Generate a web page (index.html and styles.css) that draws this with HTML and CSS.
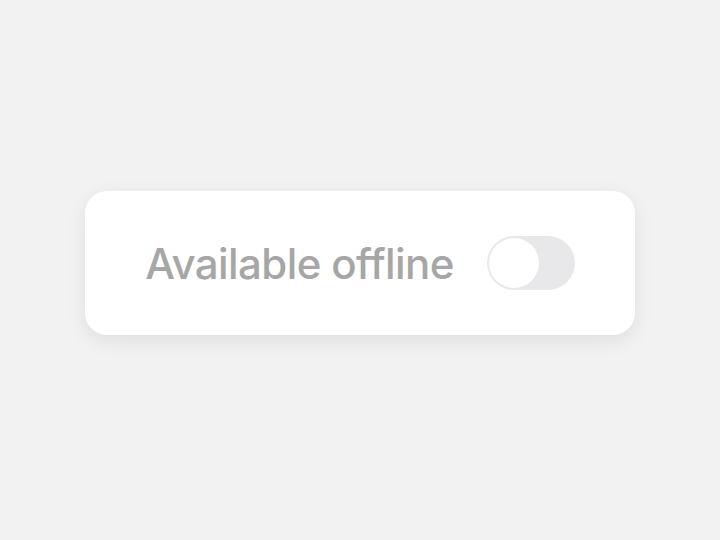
FILE: index.html
```html
<!DOCTYPE html>
<html lang="en">

<head>
  <meta charset="UTF-8" />
  <meta name="viewport" content="width=device-width, initial-scale=1.0" />
  <title>Available offline</title>
  <link rel="stylesheet" href="styles.css">
</head>

<body>

  <div class="card">
    <span class="label">Available offline</span>
    <button class="toggle" type="button" aria-pressed="false">
      <span class="knob"></span>
    </button>
  </div>

</body>

</html>
```

FILE: styles.css
```css
body {
  font-family: Inter, "Noto Sans", sans-serif;
  background: #f2f2f2;
  margin: 0;
  padding: 0 0 14px;
  height: 526px;
  display: flex;
  justify-content: center;
  align-items: center;
}

.card {
  background: #ffffff;
  border-radius: 22px;
  padding: 45px 60px;
  display: flex;
  align-items: center;
  gap: 33px;
  box-shadow: 0 6px 20px rgba(0, 0, 0, 0.08);
}

.label {
  font-size: 42px;
  font-weight: 500;
  color: #a6a6a6;
  letter-spacing: -0.6px;
}

.toggle {
  width: 88px;
  height: 54px;
  border: none;
  border-radius: 27px;
  background: #e8e8ea;
  padding: 2px;
  display: flex;
  align-items: center;
  cursor: pointer;
}

.knob {
  width: 50px;
  height: 50px;
  border-radius: 50%;
  background: #ffffff;
}
```
